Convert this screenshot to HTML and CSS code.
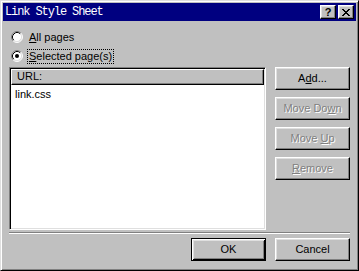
FILE: index.html
```html
<!DOCTYPE html>
<html>
<head>
<meta charset="utf-8">
<link rel="stylesheet" href="styles.css">
</head>
<body>
<div class="window">
  <div class="titlebar">
    <span class="title">Link Style Sheet</span>
    <div class="caption-btns">
      <span class="cap-btn help">?</span>
      <span class="cap-btn close"><svg width="8" height="7" viewBox="0 0 8 7"><path d="M0 0h2v1h-2zM6 0h2v1h-2zM1 1h2v1h-2zM5 1h2v1h-2zM2 2h4v1h-4zM3 3h2v1h-2zM2 4h4v1h-4zM1 5h2v1h-2zM5 5h2v1h-2zM0 6h2v1h-2zM6 6h2v1h-2z" fill="#000"/></svg></span>
    </div>
  </div>
  <div class="client">
    <div class="radio-row">
      <svg class="radio" width="12" height="12" viewBox="0 0 12 12"><circle cx="6" cy="6" r="5" fill="#fff"/><path d="M2.11 9.89A5.5 5.5 0 0 1 9.89 2.11" stroke="#808080" fill="none"/><path d="M9.89 2.11A5.5 5.5 0 0 1 2.11 9.89" stroke="#fff" fill="none"/><path d="M2.82 9.18A4.5 4.5 0 0 1 9.18 2.82" stroke="#000" fill="none"/><path d="M9.18 2.82A4.5 4.5 0 0 1 2.82 9.18" stroke="#dfdfdf" fill="none"/></svg>
      <span class="label"><u>A</u>ll pages</span>
    </div>
    <div class="radio-row">
      <svg class="radio" width="12" height="12" viewBox="0 0 12 12"><circle cx="6" cy="6" r="5" fill="#fff"/><path d="M2.11 9.89A5.5 5.5 0 0 1 9.89 2.11" stroke="#808080" fill="none"/><path d="M9.89 2.11A5.5 5.5 0 0 1 2.11 9.89" stroke="#fff" fill="none"/><path d="M2.82 9.18A4.5 4.5 0 0 1 9.18 2.82" stroke="#000" fill="none"/><path d="M9.18 2.82A4.5 4.5 0 0 1 2.82 9.18" stroke="#dfdfdf" fill="none"/><circle cx="6" cy="6" r="2" fill="#000"/></svg>
      <span class="label focus"><u>S</u>elected page(s)</span>
    </div>
    <div class="main">
      <div class="list">
        <div class="list-header">URL:</div>
        <div class="list-item">link.css</div>
      </div>
      <div class="side-btns">
        <div class="btn"><span>A<u>d</u>d...</span></div>
        <div class="btn disabled"><span>Move Do<u>w</u>n</span></div>
        <div class="btn disabled"><span>Move <u>U</u>p</span></div>
        <div class="btn disabled"><span><u>R</u>emove</span></div>
      </div>
    </div>
    <div class="separator"></div>
    <div class="bottom-btns">
      <div class="btn default"><span>OK</span></div>
      <div class="btn"><span>Cancel</span></div>
    </div>
  </div>
</div>
</body>
</html>
```
FILE: styles.css
```css
html, body {
  margin: 0;
  padding: 0;
  background: #c0c0c0;
}
.window {
  box-sizing: border-box;
  width: 359px;
  height: 271px;
  background: #c0c0c0;
  border: 1px solid;
  border-color: #dfdfdf #000 #000 #dfdfdf;
  box-shadow: inset 1px 1px #fff, inset -1px -1px #808080;
  padding: 2px;
  display: flex;
  flex-direction: column;
  font-family: "Liberation Sans", Arial, sans-serif;
  font-size: 11px;
  color: #000;
}
.titlebar {
  height: 18px;
  background: #000080;
  display: flex;
  align-items: center;
  justify-content: space-between;
  padding: 0 2px 0 2px;
  flex: none;
}
.title {
  color: #fff;
  font-family: "Liberation Mono", "Courier New", monospace;
  font-size: 12px;
  letter-spacing: -1.1px;
  line-height: 18px;
}
.caption-btns {
  display: flex;
  gap: 2px;
}
.cap-btn {
  box-sizing: border-box;
  width: 16px;
  height: 14px;
  background: #c0c0c0;
  border: 1px solid;
  border-color: #fff #000 #000 #fff;
  box-shadow: inset -1px -1px #808080, inset 1px 1px #dfdfdf;
  display: flex;
  align-items: center;
  justify-content: center;
}
.help {
  font-family: "Liberation Sans", Arial, sans-serif;
  font-weight: bold;
  font-size: 11px;
  line-height: 12px;
  color: #000;
}
.client {
  flex: 1;
  display: flex;
  flex-direction: column;
  padding: 8px 6px 7px 6px;
}
.radio-row {
  height: 16px;
  display: flex;
  align-items: center;
  padding-left: 2px;
}
.radio-row + .radio-row {
  margin-top: 3px;
}
.radio {
  flex: none;
  margin-right: 4px;
}
.label {
  line-height: 13px;
  padding: 0 1px;
  border: 1px solid transparent;
}
.label.focus {
  border: 1px dotted #000;
}
.main {
  margin-top: 3px;
  display: flex;
  gap: 9px;
}
.list {
  box-sizing: border-box;
  width: 257px;
  height: 163px;
  background: #fff;
  border: 1px solid;
  border-color: #808080 #fff #fff #808080;
  box-shadow: inset 1px 1px #000, inset -1px -1px #dfdfdf;
  padding: 1px;
}
.list-header {
  box-sizing: border-box;
  height: 16px;
  background: #c0c0c0;
  border: 1px solid;
  border-color: #fff #000 #000 #fff;
  box-shadow: inset -1px -1px #808080;
  padding-left: 5px;
  line-height: 13px;
}
.list-item {
  padding-left: 4px;
  margin-top: 3px;
  line-height: 13px;
}
.side-btns {
  display: flex;
  flex-direction: column;
  gap: 7px;
}
.btn {
  box-sizing: border-box;
  width: 75px;
  height: 23px;
  background: #c0c0c0;
  border: 1px solid;
  border-color: #fff #000 #000 #fff;
  box-shadow: inset -1px -1px #808080, inset 1px 1px #dfdfdf;
  display: flex;
  align-items: center;
  justify-content: center;
  line-height: 13px;
}
.btn.disabled {
  color: #808080;
  text-shadow: 1px 1px 0 #fff;
}
.btn.default {
  border: 1px solid #000;
  box-shadow: inset 1px 1px #fff, inset -1px -1px #000, inset 2px 2px #dfdfdf, inset -2px -2px #808080;
}
.separator {
  margin-top: 2px;
  border-top: 1px solid #808080;
  border-bottom: 1px solid #fff;
  height: 0;
}
.bottom-btns {
  margin-top: 4px;
  display: flex;
  justify-content: flex-end;
  gap: 9px;
}
```
